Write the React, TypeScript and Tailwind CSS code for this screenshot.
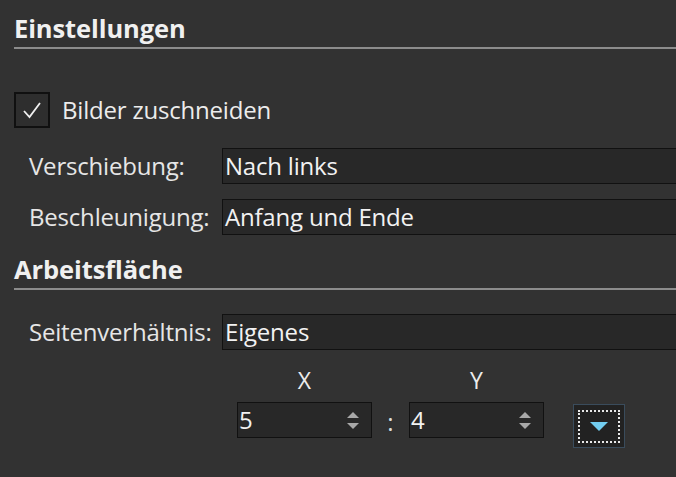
import { useState } from 'react';

const font = { fontFamily: "'Open Sans', 'Noto Sans', sans-serif" };

function Section({ title }: { title: string }) {
  return (
    <div className="flex flex-col">
      <div className="h-[26px] text-[25.5px] leading-[26px] font-bold tracking-[-0.1px] text-[#f0f0f0]">{title}</div>
      <div className="mt-[6px] h-[2px] bg-[#8c8c8c]" />
    </div>
  );
}

function Field({ label, value }: { label: string; value: string }) {
  return (
    <div className="flex items-center h-[36px]">
      <div className="w-[208px] pl-[15px] text-[24px] leading-[28px] text-[#e6e6e6] tracking-[-0.2px]">{label}</div>
      <div className="flex-1 h-[36px] border border-[#111] bg-[#282828] px-[2px] flex items-center text-[24px] leading-[28px] text-[#f2f2f2] tracking-[-0.2px]">
        {value}
      </div>
    </div>
  );
}

function Spin({ value }: { value: string }) {
  return (
    <div className="w-[135px] h-[36px] border border-[#111] bg-[#282828] flex items-center justify-between pl-[1px] pr-[12px]">
      <span className="text-[24px] leading-[28px] text-[#f2f2f2]">{value}</span>
      <div className="flex flex-col gap-[5px] items-center">
        <div className="w-0 h-0 border-l-[6px] border-r-[6px] border-b-[6px] border-l-transparent border-r-transparent border-b-[#a8a8a8]" />
        <div className="w-0 h-0 border-l-[6px] border-r-[6px] border-t-[6px] border-l-transparent border-r-transparent border-t-[#a8a8a8]" />
      </div>
    </div>
  );
}

export default function App() {
  const [checked, setChecked] = useState(true);

  return (
    <div className="w-[676px] h-[477px] overflow-hidden bg-[#323232]" style={font}>
      <div className="w-[720px] pl-[14px] pt-[15px] flex flex-col">
        <Section title="Einstellungen" />

        <label className="mt-[43px] flex items-center gap-[12px] cursor-pointer" onClick={() => setChecked(!checked)}>
          <div className="w-[36px] h-[36px] border-2 border-[#101010] bg-[#2e2e2e] flex items-center justify-center">
            {checked && (
              <svg width="22" height="20" viewBox="0 0 22 20" fill="none">
                <path d="M3 11 L8.5 17 L19 3" stroke="#f0f0f0" strokeWidth="1.8" />
              </svg>
            )}
          </div>
          <span className="text-[24px] leading-[28px] text-[#ececec] tracking-[-0.2px]">Bilder zuschneiden</span>
        </label>

        <div className="mt-[20px] flex flex-col gap-[15px]">
          <Field label="Verschiebung:" value="Nach links" />
          <Field label="Beschleunigung:" value="Anfang und Ende" />
        </div>

        <div className="mt-[21px]">
          <Section title="Arbeitsfläche" />
        </div>

        <div className="mt-[24px]">
          <Field label="Seitenverhältnis:" value="Eigenes" />
        </div>

        <div className="mt-[15px] flex flex-col">
          <div className="flex h-[30px] items-center text-[23px] text-[#ececec]">
            <div className="ml-[223px] w-[135px] text-center">X</div>
            <div className="ml-[37px] w-[135px] text-center">Y</div>
          </div>
          <div className="mt-[7px] flex items-start">
            <div className="ml-[223px]">
              <Spin value="5" />
            </div>
            <div className="w-[37px] h-[40px] flex items-end justify-center pb-[2px] text-[24px] text-[#dcdcdc]">:</div>
            <Spin value="4" />
            <button className="ml-[29px] mt-[2px] w-[52px] h-[44px] border border-[#3a4c5c] bg-[#222] flex items-center justify-center">
              <div className="w-[42px] h-[33px] border-2 border-dotted border-[#e8e8e8] flex items-center justify-center">
                <div className="w-0 h-0 border-l-[9px] border-r-[9px] border-t-[9px] border-l-transparent border-r-transparent border-t-[#72cdf0]" />
              </div>
            </button>
          </div>
        </div>
      </div>
    </div>
  );
}
